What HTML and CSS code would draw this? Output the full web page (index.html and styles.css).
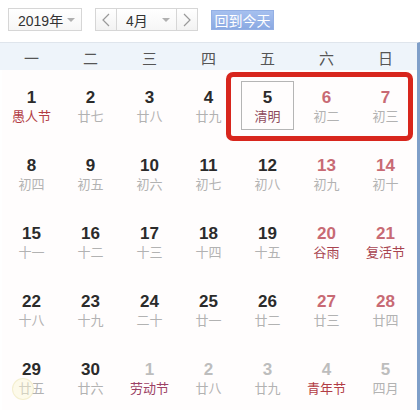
FILE: index.html
```html
<!DOCTYPE html>
<html lang="zh-CN">
<head>
<meta charset="utf-8">
<link rel="stylesheet" href="styles.css">
</head>
<body>
<div class="cal">
  <div class="toolbar">
    <div class="select year"><span>2019年</span><i class="caret"></i></div>
    <div class="monthgroup">
      <div class="navbtn"><svg width="10" height="14" viewBox="0 0 10 14"><path d="M8 1 L2 7 L8 13" fill="none" stroke="#999" stroke-width="1.2"/></svg></div>
      <div class="select month"><span>4月</span><i class="caret"></i></div>
      <div class="navbtn"><svg width="10" height="14" viewBox="0 0 10 14"><path d="M2 1 L8 7 L2 13" fill="none" stroke="#999" stroke-width="1.2"/></svg></div>
    </div>
    <div class="today">回到今天</div>
  </div>
  <div class="main">
    <div class="weekhead">
      <span>一</span><span>二</span><span>三</span><span>四</span><span>五</span><span>六</span><span>日</span>
    </div>
    <div class="grid">
      <div class="cell"><div class="day"><b>1</b><em class="fest">愚人节</em></div></div>
      <div class="cell"><div class="day"><b>2</b><em>廿七</em></div></div>
      <div class="cell"><div class="day"><b>3</b><em>廿八</em></div></div>
      <div class="cell"><div class="day"><b>4</b><em>廿九</em></div></div>
      <div class="cell"><div class="day sel"><b>5</b><em class="term">清明</em></div></div>
      <div class="cell wk"><div class="day"><b>6</b><em>初二</em></div></div>
      <div class="cell wk"><div class="day"><b>7</b><em>初三</em></div></div>

      <div class="cell"><div class="day"><b>8</b><em>初四</em></div></div>
      <div class="cell"><div class="day"><b>9</b><em>初五</em></div></div>
      <div class="cell"><div class="day"><b>10</b><em>初六</em></div></div>
      <div class="cell"><div class="day"><b>11</b><em>初七</em></div></div>
      <div class="cell"><div class="day"><b>12</b><em>初八</em></div></div>
      <div class="cell wk"><div class="day"><b>13</b><em>初九</em></div></div>
      <div class="cell wk"><div class="day"><b>14</b><em>初十</em></div></div>

      <div class="cell"><div class="day"><b>15</b><em>十一</em></div></div>
      <div class="cell"><div class="day"><b>16</b><em>十二</em></div></div>
      <div class="cell"><div class="day"><b>17</b><em>十三</em></div></div>
      <div class="cell"><div class="day"><b>18</b><em>十四</em></div></div>
      <div class="cell"><div class="day"><b>19</b><em>十五</em></div></div>
      <div class="cell wk"><div class="day"><b>20</b><em class="term">谷雨</em></div></div>
      <div class="cell wk"><div class="day"><b>21</b><em class="term">复活节</em></div></div>

      <div class="cell"><div class="day"><b>22</b><em>十八</em></div></div>
      <div class="cell"><div class="day"><b>23</b><em>十九</em></div></div>
      <div class="cell"><div class="day"><b>24</b><em>二十</em></div></div>
      <div class="cell"><div class="day"><b>25</b><em>廿一</em></div></div>
      <div class="cell"><div class="day"><b>26</b><em>廿二</em></div></div>
      <div class="cell wk"><div class="day"><b>27</b><em>廿三</em></div></div>
      <div class="cell wk"><div class="day"><b>28</b><em>廿四</em></div></div>

      <div class="cell"><div class="day cursor"><b>29</b><em>廿五</em></div></div>
      <div class="cell"><div class="day"><b>30</b><em>廿六</em></div></div>
      <div class="cell next"><div class="day"><b>1</b><em class="fest2">劳动节</em></div></div>
      <div class="cell next"><div class="day"><b>2</b><em>廿八</em></div></div>
      <div class="cell next"><div class="day"><b>3</b><em>廿九</em></div></div>
      <div class="cell next"><div class="day"><b>4</b><em class="fest">青年节</em></div></div>
      <div class="cell next"><div class="day"><b>5</b><em>四月</em></div></div>
    </div>
    <div class="highlight"></div>
  </div>
</div>
</body>
</html>
```

FILE: styles.css
```css
* { box-sizing: border-box; }
html, body { margin: 0; padding: 0; background: #fff; }
body { font-family: "Liberation Sans", "Noto Sans CJK SC", sans-serif; }

.cal { width: 420px; height: 410px; overflow: hidden; background: #fff; }

.toolbar {
  height: 42px;
  display: flex;
  align-items: flex-start;
  padding: 8px 0 0 8px;
}
.select {
  height: 23px;
  border: 1px solid #d6d6d6;
  background: linear-gradient(#fff, #f6f6f6);
  display: flex;
  align-items: center;
  justify-content: space-between;
  font-family: "Liberation Sans", "Noto Sans CJK SC", sans-serif;
  font-size: 14px;
  color: #333;
}
.select.year { width: 74px; padding: 0 3px 0 9px; }
.select.month { width: 59px; padding: 0 3px 0 9px; border-left: none; border-right: none; }
.caret {
  width: 0; height: 0;
  border-left: 4px solid transparent;
  border-right: 4px solid transparent;
  border-top: 4px solid #b0b0b0;
  margin-right: 3px;
}
.monthgroup { display: flex; margin-left: 13px; }
.navbtn {
  width: 22px; height: 23px;
  border: 1px solid #d6d6d6;
  background: linear-gradient(#fff, #f2f2f2);
  display: flex; align-items: center; justify-content: center;
}
.today {
  margin: 2px 0 0 13px;
  width: 63px; height: 20px;
  background: linear-gradient(#a6c0ef, #8aa9e2);
  border: 1px solid #93afe4;
  color: #fff;
  font-family: "Noto Sans CJK SC", sans-serif;
  font-size: 14px;
  line-height: 18px;
  text-align: center;
}

.main {
  position: relative;
  height: 368px;
  border-top: 1px solid #dfe5ec;
  border-right: 3px solid #7f9fc9;
  padding-left: 2px;
}
.weekhead {
  height: 27px;
  background: #eef4fa;
  margin-left: -2px;
  padding-left: 2px;
  display: grid;
  grid-template-columns: repeat(7, 59px);
  align-items: center;
}
.weekhead span {
  text-align: center;
  font-family: "Noto Sans CJK SC", sans-serif;
  font-size: 15px;
  color: #555;
  line-height: 27px;
  padding-top: 1px;
}
.grid {
  display: grid;
  grid-template-columns: repeat(7, 59px);
  grid-auto-rows: 68px;
  background: #fffdfd;
}
.cell { display: flex; justify-content: center; }
.day {
  margin-top: 11px;
  width: 53px; height: 49px;
  border: 1px solid transparent;
  display: flex;
  flex-direction: column;
  align-items: center;
  padding-top: 6px;
  position: relative;
}
.day.sel { border-color: #b5b5b5; }
.day b {
  font-family: "Liberation Sans", Arial, sans-serif;
  font-weight: bold;
  font-size: 17px;
  line-height: 20px;
  color: #2b2b2b;
}
.day em {
  font-style: normal;
  font-family: "Noto Sans CJK SC", sans-serif;
  font-size: 13px;
  line-height: 16px;
  color: #b2b2b2;
}
.wk .day b { color: #c86a74; }
.next .day b { color: #bdbdbd; }
.day em.fest { color: #b23c44; }
.day em.fest2 { color: #9c4266; }
.day em.term { color: #9a4756; }
.wk .day em.term { color: #a8434f; }
.day.sel em.term { color: #8e4a5c; }

.day.cursor::after {
  content: "";
  position: absolute;
  left: 6px; top: 24px;
  width: 20px; height: 20px;
  border-radius: 50%;
  background: rgba(250, 246, 210, 0.45);
  border: 1px solid rgba(235, 228, 180, 0.5);
}

.highlight {
  position: absolute;
  left: 226px;
  top: 29px;
  width: 187px;
  height: 69px;
  border: 5px solid #d8261d;
  border-radius: 7px;
  pointer-events: none;
}
```
